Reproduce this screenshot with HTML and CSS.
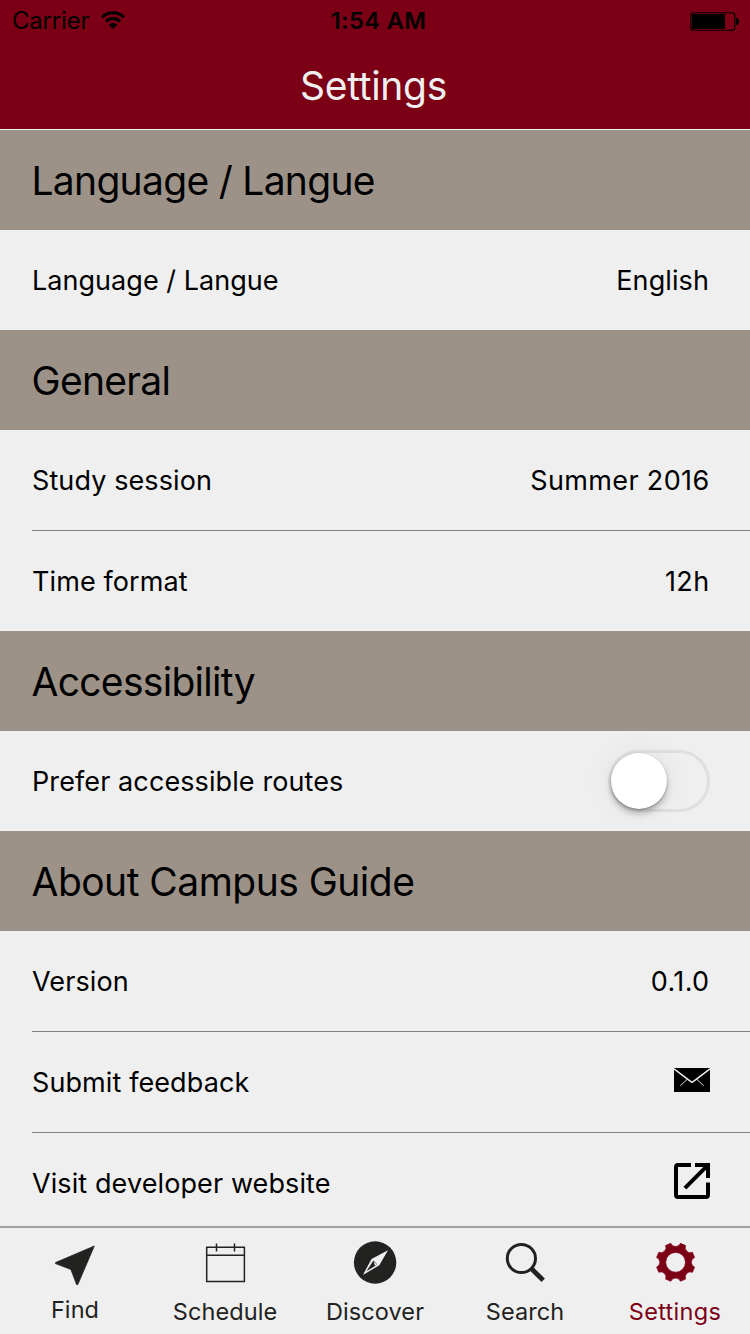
FILE: index.html
```html
<!DOCTYPE html>
<html lang="en">
<head>
<meta charset="utf-8">
<title>Settings</title>
<link rel="stylesheet" href="styles.css">
</head>
<body>
<div class="app">
  <header class="top">
    <div class="status">
      <div class="status-left">
        <span class="carrier">Carrier</span>
        <svg class="wifi" width="26" height="20" viewBox="0 0 26 20"><g fill="none" stroke="#000" stroke-width="3"><path d="M2.1 7.2A15.4 15.4 0 0 1 23.9 7.2"/><path d="M5.9 11.4A10 10 0 0 1 20.1 11.4"/></g><path d="M13 19L8.7 14.8A6 6 0 0 1 17.3 14.8Z"/></svg>
      </div>
      <span class="clock">1:54 AM</span>
      <svg class="battery" width="50" height="20" viewBox="0 0 50 20"><rect x=".75" y="1.75" width="44" height="17.5" rx="2.5" fill="none" stroke="#000" stroke-width="1.2"/><rect x="2" y="3" width="33" height="15" rx="1"/><path d="M46 7h1.5q1.5 1 1.5 3.5t-1.5 3.5H46z"/></svg>
    </div>
    <h1 class="title">Settings</h1>
  </header>
  <main class="list">
    <h2 class="section lang-section">Language / Langue</h2>
    <div class="row"><span class="label lang-label">Language / Langue</span><span class="value">English</span></div>
    <h2 class="section general">General</h2>
    <div class="row"><span class="label">Study session</span><span class="value number">Summer 2016</span></div>
    <div class="divider"></div>
    <div class="row"><span class="label">Time format</span><span class="value number">12h</span></div>
    <h2 class="section access">Accessibility</h2>
    <div class="row"><span class="label">Prefer accessible routes</span><span class="switch"><span class="knob"></span></span></div>
    <h2 class="section about">About Campus Guide</h2>
    <div class="row"><span class="label">Version</span><span class="value number">0.1.0</span></div>
    <div class="divider"></div>
    <div class="row"><span class="label">Submit feedback</span><svg class="mail" width="36" height="24" viewBox="0 0 36 24"><path d="M0 0h36v24H0z"/><path d="M0 .8L13.5 11.2 18 14.3 22.5 11.2 36 .8" fill="none" stroke="#efefef" stroke-width="1.5"/><path d="M13.5 11L6.3 17.8M22.5 11l7.2 6.8" fill="none" stroke="#efefef" stroke-width=".9"/></svg></div>
    <div class="divider"></div>
    <div class="row"><span class="label">Visit developer website</span><svg class="external" width="36" height="36" viewBox="0 0 36 36"><path d="M17 2H4Q2 2 2 4V32Q2 34 4 34H32Q34 34 34 32V19.5" fill="none" stroke="#000" stroke-width="4"/><path d="M21 0H36V15H32V6.8L12.3 26.5 9.5 23.7 29.2 4H21Z"/></svg></div>
  </main>
  <nav class="tabs">
    <a class="tab find"><svg width="50" height="50" viewBox="0 0 50 50"><path d="M44.3 8L5.5 24.6 5.5 25.6 20.9 31.5 26.6 46.6 27.8 46.6Z" fill="#222221" stroke="#222221" stroke-width=".8" stroke-linejoin="round"/></svg><span>Find</span></a>
    <a class="tab schedule"><svg width="50" height="50" viewBox="0 0 50 50"><path d="M6.7 9.2H44.4V43.4H6.7ZM6.7 17.2H44.4M16.5 5.5V13.5M34.5 5.5V13.5" fill="none" stroke="#222221" stroke-width="1.5"/></svg><span>Schedule</span></a>
    <a class="tab discover"><svg width="50" height="50" viewBox="0 0 50 50"><circle cx="25.1" cy="24.5" r="21.2" fill="#222221"/><path d="M38 12.2L29.3 27.3 12.9 37 21.5 21Z" fill="#efefef"/><path d="M23.4 22.5L27.4 26.4 16.5 33.2Z" fill="#222221"/><path d="M23.6 23.4L27 26.6 25 27.8Z" fill="#efefef"/></svg><span>Discover</span></a>
    <a class="tab search"><svg width="50" height="50" viewBox="0 0 50 50"><g fill="none" stroke="#222221"><circle cx="21.4" cy="20.5" r="14.1" stroke-width="3"/><path d="M31 30.3L43.2 42.3" stroke-width="4.8"/></g></svg><span>Search</span></a>
    <a class="tab settings"><svg width="50" height="50" viewBox="0 0 50 50"><path transform="translate(25.6 24.3)" fill="#7c0015" stroke="#7c0015" stroke-width=".7" stroke-linejoin="round" fill-rule="evenodd" d="M-4.8-19A5.2 5.2 0 0 0 4.8-19L10-16.8A5.2 5.2 0 0 0 16.8-10L19-4.8A5.2 5.2 0 0 0 19 4.8L16.8 10A5.2 5.2 0 0 0 10 16.8L4.8 19A5.2 5.2 0 0 0-4.8 19L-10 16.8A5.2 5.2 0 0 0-16.8 10L-19 4.8A5.2 5.2 0 0 0-19-4.8L-16.8-10A5.2 5.2 0 0 0-10-16.8ZM0-9.9A9.9 9.9 0 1 0 0 9.9 9.9 9.9 0 1 0 0-9.9Z"/></svg><span>Settings</span></a>
  </nav>
</div>
</body>
</html>
```

FILE: styles.css
```css
* { box-sizing: border-box; }
body { margin: 0; background: #efefef; color: #000; font-family: Inter, Roboto, sans-serif; }
.app { width: 750px; height: 1334px; display: flex; flex-direction: column; overflow: hidden; }
.top { height: 130px; flex: none; background: #7c0015; border-bottom: 1px solid #efefef; }
.status { height: 40px; padding: 1px 10px 0 12px; display: grid; grid-template-columns: 1fr auto 1fr; align-items: center; font-size: 24px; line-height: 40px; }
.status-left { display: flex; align-items: center; gap: 11px; }
.carrier { letter-spacing: -.2px; }
.wifi { margin-bottom: 2px; }
.battery { margin-bottom: 1px; justify-self: end; }
.clock { padding-left: 5px; font-size: 23.5px; font-weight: 600; letter-spacing: .45px; }
.title { margin: 0; padding-right: 3px; font-size: 39px; font-weight: 400; line-height: 92px; letter-spacing: -.3px; text-align: center; color: #efefef; }
.list { flex: 1; min-height: 0; overflow: hidden; }
.section { margin: 0; height: 100px; padding-left: 31.5px; background: #9c9287; font-size: 39px; font-weight: 400; line-height: 102px; letter-spacing: -.7px; }
.about { letter-spacing: -.52px; }
.row { height: 100px; padding: 0 40px 0 32px; display: flex; align-items: center; justify-content: space-between; font-size: 27px; line-height: 98px; white-space: nowrap; }
.label, .value { padding-top: 2px; letter-spacing: .1px; }
.lang-label { letter-spacing: .04px; }
.value { padding-right: 1px; }
.number { padding-right: .5px; letter-spacing: .35px; }
.mail, .external { margin-bottom: 4px; }
.divider { height: 1px; margin-left: 32px; background: #808080; }
.switch { width: 102px; height: 62px; border: 3px solid #dfdfdf; border-radius: 31px; display: flex; align-items: center; }
.knob { width: 56px; height: 56px; border-radius: 50%; background: #fff; box-shadow: 0 5px 6px rgba(0,0,0,.22), 0 1px 2px rgba(0,0,0,.3), 0 0 30px rgba(0,0,0,.07); }
.tabs { height: 108px; flex: none; display: flex; border-top: 2px solid #a0a0a0; background: #efefef; color: #222221; }
.tab { width: 150px; padding-top: 10px; display: flex; flex-direction: column; align-items: center; font-size: 23.5px; line-height: 30px; letter-spacing: .1px; }
.tab svg { flex: none; }
.tab span { padding-top: 9px; }
.find span { padding-top: 7px; }
.settings { color: #7c0015; letter-spacing: .3px; }
```
